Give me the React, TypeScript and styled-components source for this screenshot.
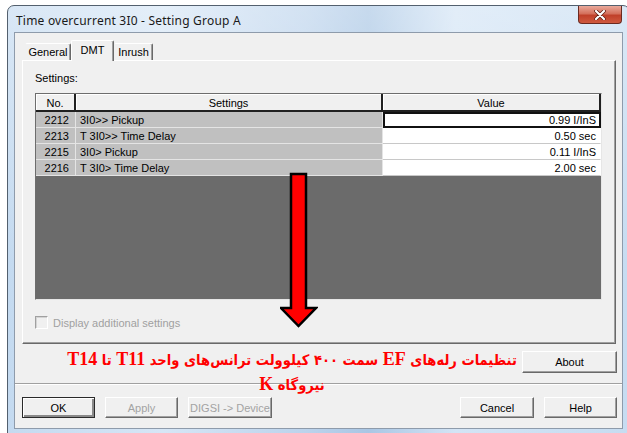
import styled, { createGlobalStyle } from 'styled-components';

const GlobalStyle = createGlobalStyle`
  html, body {
    margin: 0;
    padding: 0;
    background: #ffffff;
  }
  body {
    font-family: "Liberation Sans", Arial, sans-serif;
    font-size: 11px;
    color: #000;
  }
`;

const Page = styled.div`
  position: relative;
  width: 627px;
  height: 433px;
  overflow: hidden;
  box-sizing: border-box;
  padding: 5px 0 0 7px;
  background: #fff;
`;

const Window = styled.div`
  width: 623px;
  box-sizing: border-box;
  border: 1px solid #53606e;
  border-radius: 7px 7px 0 0;
  padding: 0 6px 8px 6px;
  background:
    linear-gradient(180deg, rgba(255, 255, 255, 0.35) 0%, rgba(255, 255, 255, 0) 60%),
    linear-gradient(90deg, #c4daf0 0%, #d6e6f6 25%, #bcd3ec 48%, #a9c6e4 58%, #d3e4f5 72%, #c6dcf1 100%);
`;

const TitleBar = styled.div`
  height: 26px;
  display: flex;
  align-items: flex-start;
`;

const Title = styled.span`
  margin: 6px 0 0 2px;
  font-family: "Noto Sans", "Liberation Sans", sans-serif;
  font-size: 12px;
  color: #1a1a1a;
  letter-spacing: 0.2px;
`;

const CloseButton = styled.div`
  margin: 0 1px 0 auto;
  width: 44px;
  height: 18px;
  box-sizing: border-box;
  border: 1px solid #6b2a20;
  border-top: none;
  border-radius: 0 0 4px 4px;
  background: linear-gradient(180deg, #e9a99b 0%, #d4705c 45%, #c0402a 55%, #cf5a3f 100%);
  display: flex;
  align-items: center;
  justify-content: center;
`;

const Client = styled.div`
  background: #f0f0f0;
  border: 1px solid #8e9bab;
  padding: 8px 6px 10px 7px;
  display: flex;
  flex-direction: column;
`;

const TabStrip = styled.div`
  display: flex;
  align-items: flex-end;
  height: 19px;
  padding-left: 3px;
  position: relative;
  z-index: 1;
`;

const Tab = styled.div<{ $active?: boolean; $w: number }>`
  width: ${(p) => p.$w}px;
  height: ${(p) => (p.$active ? 21 : 17)}px;
  margin-bottom: ${(p) => (p.$active ? -1 : 0)}px;
  box-sizing: border-box;
  background: #f0f0f0;
  border-top: 1px solid #fff;
  border-left: 1px solid ${(p) => (p.$active ? '#fff' : 'transparent')};
  border-right: 1px solid #696969;
  box-shadow: inset -1px 0 0 #a0a0a0;
  border-radius: 2px 2px 0 0;
  display: flex;
  justify-content: center;
  padding-top: ${(p) => (p.$active ? 3 : 2)}px;
`;

const Panel = styled.div`
  height: 284px;
  box-sizing: border-box;
  border: 1px solid;
  border-color: #fff #696969 #696969 #fff;
  box-shadow: inset -1px -1px 0 #a0a0a0;
  padding: 11px 12px 0 12px;
  display: flex;
  flex-direction: column;
`;

const Label = styled.div`
  height: 14px;
  margin-bottom: 7px;
`;

const Grid = styled.div`
  height: 207px;
  width: 567px;
  box-sizing: border-box;
  border: 1px solid;
  border-color: #6d6d6d #e6e6e6 #e6e6e6 #6d6d6d;
  display: flex;
  flex-direction: column;
  background: #6b6b6b;
`;

const Row = styled.div<{ $h: number }>`
  display: grid;
  grid-template-columns: 40px 307px 1fr;
  height: ${(p) => p.$h}px;
`;

const HeadCell = styled.div`
  background: #f0f0f0;
  border-right: 2px solid #202020;
  border-bottom: 2px solid #202020;
  box-shadow: inset 1px 1px 0 #fff;
  display: flex;
  align-items: center;
  justify-content: center;
  padding-top: 1px;
`;

const Cell = styled.div<{ $kind: 'no' | 'name' | 'value'; $focus?: boolean }>`
  box-sizing: border-box;
  display: flex;
  align-items: center;
  background: ${(p) => (p.$kind === 'value' ? '#ffffff' : '#c0c0c0')};
  justify-content: ${(p) => (p.$kind === 'name' ? 'flex-start' : 'flex-end')};
  padding: 0 ${(p) => (p.$kind === 'name' ? 0 : p.$kind === 'no' ? 6 : 4)}px 0 ${(p) => (p.$kind === 'name' ? 4 : 0)}px;
  border-bottom: 1px solid ${(p) => (p.$kind === 'value' ? '#c8c8c8' : '#e4e4e4')};
  border-right: 1px solid ${(p) => (p.$kind === 'value' ? 'transparent' : '#e4e4e4')};
  ${(p) => p.$focus && 'outline: 2px solid #111; outline-offset: -2px;'}
`;

const Filler = styled.div`
  flex: 1;
  background: #6b6b6b;
`;

const CheckRow = styled.label`
  display: flex;
  align-items: center;
  gap: 5px;
  margin-top: 16px;
  color: #a0a0a0;
`;

const CheckBox = styled.span`
  width: 11px;
  height: 11px;
  border: 1px solid;
  border-color: #a0a0a0 #fff #fff #a0a0a0;
  box-shadow: inset 1px 1px 0 #d4d4d4;
  background: #f0f0f0;
`;

const AboutRow = styled.div`
  display: flex;
  justify-content: flex-end;
  margin: 7px -1px 0 0;
`;

const Separator = styled.div`
  height: 1px;
  margin: 10px -6px 0 -7px;
  background: #a0a0a0;
  border-bottom: 1px solid #fff;
`;

const ButtonRow = styled.div`
  display: flex;
  align-items: center;
  margin: 12px -1px 0 0;
`;

const Button = styled.div<{ $w: number; $h?: number; $disabled?: boolean; $default?: boolean; $gap?: number }>`
  width: ${(p) => p.$w}px;
  height: ${(p) => p.$h ?? 21}px;
  margin-left: ${(p) => p.$gap ?? 0}px;
  box-sizing: border-box;
  background: #f0f0f0;
  border: 1px solid;
  border-color: ${(p) => (p.$default ? '#2a2a2a' : '#fff #696969 #696969 #fff')};
  box-shadow: ${(p) =>
    p.$default
      ? 'inset 1px 1px 0 #fff, inset -2px -2px 0 #8a8a8a'
      : 'inset -1px -1px 0 #a0a0a0'};
  display: flex;
  align-items: center;
  justify-content: center;
  color: ${(p) => (p.$disabled ? '#a3a3a3' : '#000')};
`;

const Spacer = styled.div`
  flex: 1;
`;

const Arrow = styled.svg`
  position: absolute;
  left: 280px;
  top: 172px;
`;

const Note = styled.div`
  position: absolute;
  left: 60px;
  top: 347px;
  width: 464px;
  direction: rtl;
  text-align: center;
  color: #ff0000;
  font-family: "DejaVu Sans Condensed", "DejaVu Sans", sans-serif;
  font-weight: bold;
  font-size: 14.6px;
  line-height: 25px;
`;

const NoteLine = styled.div`
  white-space: nowrap;
`;

const Latin = styled.span`
  font-family: "Liberation Serif", "Times New Roman", serif;
  font-size: 18px;
`;

const rows = [
  { no: '2212', name: '3I0>> Pickup', value: '0.99 I/InS' },
  { no: '2213', name: 'T 3I0>> Time Delay', value: '0.50 sec' },
  { no: '2215', name: '3I0> Pickup', value: '0.11 I/InS' },
  { no: '2216', name: 'T 3I0> Time Delay', value: '2.00 sec' },
];

export default function App() {
  return (
    <Page>
      <GlobalStyle />
      <Window>
        <TitleBar>
          <Title>Time overcurrent 3I0 - Setting Group A</Title>
          <CloseButton>
            <svg width="12" height="10" viewBox="0 0 12 10">
              <path d="M2 1 L10 9 M10 1 L2 9" stroke="#5a1a10" strokeWidth="3.6" strokeLinecap="round" />
              <path d="M2 1 L10 9 M10 1 L2 9" stroke="#ffffff" strokeWidth="2.2" strokeLinecap="round" />
            </svg>
          </CloseButton>
        </TitleBar>
        <Client>
          <TabStrip>
            <Tab $w={46}>General</Tab>
            <Tab $w={43} $active>DMT</Tab>
            <Tab $w={39}>Inrush</Tab>
          </TabStrip>
          <Panel>
            <Label>Settings:</Label>
            <Grid>
              <Row $h={18}>
                <HeadCell>No.</HeadCell>
                <HeadCell>Settings</HeadCell>
                <HeadCell>Value</HeadCell>
              </Row>
              {rows.map((r, i) => (
                <Row $h={16} key={r.no}>
                  <Cell $kind="no">{r.no}</Cell>
                  <Cell $kind="name">{r.name}</Cell>
                  <Cell $kind="value" $focus={i === 0}>
                    {r.value}
                  </Cell>
                </Row>
              ))}
              <Filler />
            </Grid>
            <CheckRow>
              <CheckBox />
              Display additional settings
            </CheckRow>
          </Panel>
          <AboutRow>
            <Button $w={95} $h={22}>About</Button>
          </AboutRow>
          <Separator />
          <ButtonRow>
            <Button $w={73} $default>
              OK
            </Button>
            <Button $w={73} $disabled $gap={10}>
              Apply
            </Button>
            <Button $w={84} $disabled $gap={10}>
              DIGSI -&gt; Device
            </Button>
            <Spacer />
            <Button $w={74}>Cancel</Button>
            <Button $w={73} $gap={10}>
              Help
            </Button>
          </ButtonRow>
        </Client>
      </Window>
      <Arrow width="38" height="156" viewBox="0 0 38 156">
        <polygon
          points="11,2 26,2 26,136 36,136 18.5,154 1,136 11,136"
          fill="#ff0000"
          stroke="#000"
          strokeWidth="2.5"
          strokeLinejoin="miter"
        />
      </Arrow>
      <Note>
        <NoteLine>
          تنظیمات رله‌های <Latin>EF</Latin> سمت ۴۰۰ کیلوولت ترانس‌های واحد <Latin>T11</Latin> تا{' '}
          <Latin>T14</Latin>
        </NoteLine>
        <NoteLine>
          نیروگاه <Latin>K</Latin>
        </NoteLine>
      </Note>
    </Page>
  );
}
